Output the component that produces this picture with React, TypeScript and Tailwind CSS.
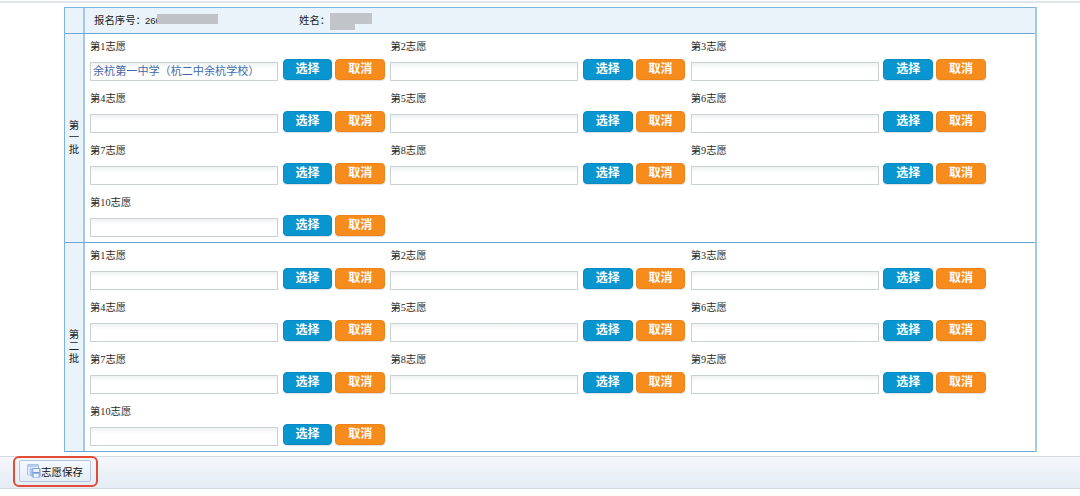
const serifLabel = "font-['Liberation_Serif','Noto_Sans_CJK_SC',sans-serif]";

function Choice({ index, value }: { index: number; value?: string }) {
  return (
    <div className="h-[52px] pt-[5px]">
      <div className={`h-[15px] whitespace-nowrap text-[10.3px] leading-[15px] text-[#2a2a2a] ${serifLabel}`}>
        第{index}志愿
      </div>
      <div className="mt-[5px] flex items-start">
        <div className="mt-[3px] h-[19px] w-[188px] shrink-0 overflow-hidden whitespace-nowrap border border-[#c9d1d1] bg-linear-to-b from-[#eff1f2] via-white via-35% to-white pl-[2px] text-[11.1px] leading-[17px] text-[#426aa8]">
          {value}
        </div>
        <button className="ml-[4.7px] h-[20.5px] w-[49.5px] shrink-0 rounded-[4px] border border-[#078bc2] bg-[#0995cf] text-[12px] leading-[18px] font-bold text-white shadow-[0_1px_1px_#0002]">
          选择
        </button>
        <button className="ml-[3.3px] h-[20.5px] w-[49.5px] shrink-0 rounded-[4px] border border-[#ef8317] bg-[#f68c1c] text-[12px] leading-[18px] font-bold text-white shadow-[0_1px_1px_#0002]">
          取消
        </button>
      </div>
    </div>
  );
}

function Batch({ name, first }: { name: string; first?: string }) {
  return (
    <div className="flex h-[209px] border-b border-[#6ba6d8]">
      <div className="flex w-[20px] shrink-0 flex-col items-center justify-center border-r-2 border-[#a3c8ea] bg-[#eaf3fa] text-[10.4px] leading-[12px] text-[#222]">
        {name.split("").map((c) => (
          <span key={c}>{c}</span>
        ))}
      </div>
      <div className="grid grid-cols-[300.4px_300.4px_300.4px] content-start pl-[5px]">
        {Array.from({ length: 10 }, (_, i) => (
          <Choice key={i} index={i + 1} value={i === 0 ? first : undefined} />
        ))}
      </div>
    </div>
  );
}

function SaveIcon() {
  return (
    <svg className="shrink-0" width="14" height="14" viewBox="0 0 14 14" fill="none">
      <rect x="0.5" y="0.5" width="11" height="10.5" rx="0.5" fill="#e1edfa" stroke="#a5c1e6" />
      <path d="M1 1h10v2H1z" fill="#b4cff0" />
      <path d="M2 5.5h7M2 8h4M3.5 3v8" stroke="#b2cbea" />
      <rect x="5" y="4.5" width="8" height="8.5" rx="0.7" fill="#a5c2ee" stroke="#7d9fda" />
      <path d="M6.5 5H12v3H6.5zM7 10h4.5v3H7z" fill="#edf5ff" />
      <path d="M6 8.8h6.5" stroke="#688bd0" />
    </svg>
  );
}

export default function App() {
  return (
    <div className="flex h-[496px] w-[1080px] flex-col overflow-hidden bg-white font-['Liberation_Sans','Noto_Sans_CJK_SC',sans-serif]">
      <div className="mt-px h-[2px] shrink-0 bg-[#e1e6ed]" />
      <div className="mt-[4px] ml-[64px] h-[445px] w-[973px] shrink-0 border-t border-r-2 border-l border-[#7fb3df] border-r-[#a3c8ea]">
        <div className="flex h-[26px] border-b border-[#6ba6d8] bg-[#eaf3fa] text-[10.4px] leading-[25px] text-[#222]">
          <div className="w-[20px] shrink-0 border-r-2 border-[#a3c8ea]" />
          <div className="flex w-[214px] shrink-0 pl-[9px]">
            <span className="whitespace-nowrap">报名序号：</span>
            <span className="ml-[-1px] w-[12px] shrink-0 overflow-hidden text-[9.5px]">260</span>
            <span className="mt-[6px] h-[10px] w-[61px] bg-[#bfc3c8]" />
          </div>
          <span className="w-[31px] shrink-0 whitespace-nowrap">姓名：</span>
          <svg className="mt-[5px] h-[17px] w-[42px] shrink-0" viewBox="0 0 42 17">
            <path d="M0 0H42V11H25V17H0Z" fill="#c1c5ca" />
          </svg>
        </div>
        <Batch name="第一批" first="余杭第一中学（杭二中余杭学校）" />
        <Batch name="第二批" />
      </div>
      <div className="mt-[4px] h-[33px] shrink-0 border-t border-b border-[#d2d9e1] bg-linear-to-b from-[#f4f7fb] to-[#e5ecf5]">
        <div className="mt-[-1px] ml-[13px] flex h-[31px] w-[85px] items-center justify-center rounded-[6px] border-2 border-[#e24b36]">
          <button className="mr-px mb-px flex h-[22px] w-[72px] items-center justify-center rounded-[2px] border border-[#b3c6dc] bg-linear-to-b from-[#f5f9fd] to-[#e4edf7] text-[10.5px] leading-[20px] whitespace-nowrap text-[#111]">
            <SaveIcon />
            <span className="mt-[2px]">志愿保存</span>
          </button>
        </div>
      </div>
    </div>
  );
}
